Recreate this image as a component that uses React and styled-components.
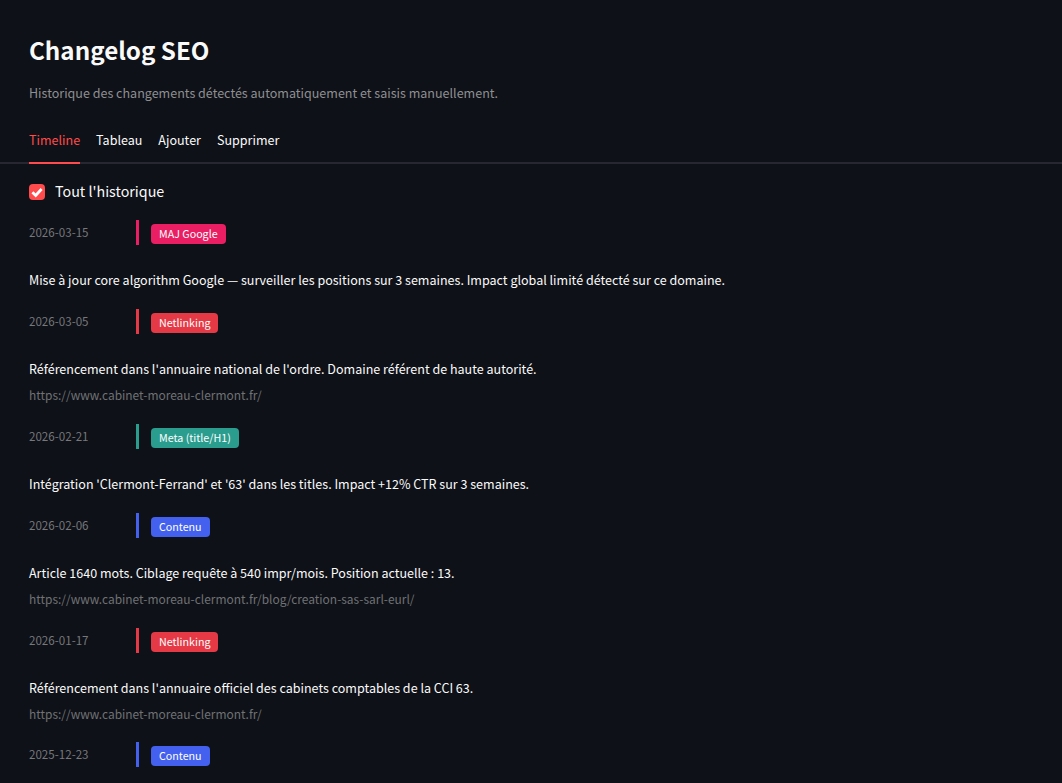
import React from "react";
import styled, { createGlobalStyle } from "styled-components";

const Global = createGlobalStyle`
  html, body { margin: 0; padding: 0; background: #0e1117; height: 100%; overflow: hidden; }
  * { box-sizing: border-box; }
`;
const Page = styled.div`
  height: 783px; overflow: hidden; background: #0e1117; color: #fafafa;
  font-family: "Noto Sans CJK JP", "Noto Sans", sans-serif; font-size: 12.5px; padding-top: 29px;
`;
const Title = styled.h1`
  margin: 0 0 0 29px; font-size: 24.2px; font-weight: 600; line-height: 42px; color: #fafafa;
`;
const Subtitle = styled.p`
  margin: 10px 0 0 29px; font-size: 12.54px; line-height: 24px; color: #8e8f92;
`;
const Tabs = styled.div`
  display: flex; gap: 16px; margin-top: 15px; padding-left: 29px; height: 44px;
  border-bottom: 2px solid #262730;
`;
const Tab = styled.div`
  height: 44px; line-height: 40px; font-size: 12.54px; color: ${p => p.$active ? "#ff4b4b" : "#fafafa"};
  border-bottom: 2px solid ${p => p.$active ? "#ff4b4b" : "transparent"};
`;
const Check = styled.label`
  display: flex; align-items: center; gap: 10px; margin: 16px 0 0 29px; height: 24px;
  font-size: 14.3px; color: #fafafa;
`;
const CheckText = styled.span`
  margin-top: -4px;
`;
const Box = styled.span`
  width: 16px; height: 16px; border-radius: 4px; background: #ff4b4b; display: flex;
  align-items: center; justify-content: center;
`;
const List = styled.div`
  margin: 16px 0 0 29px;
`;
const Head = styled.div`
  display: flex; align-items: center; height: 25px;
`;
const DateText = styled.span`
  width: 107px; font-size: 11.6px; color: #77787c; margin-top: -1.1px;
`;
const Bar = styled.span`
  width: 3px; height: 25px; background: ${p => p.$c}; margin-right: 12px;
`;
const Tag = styled.span`
  background: ${p => p.$c}; color: #fff; font-size: 10.7px; line-height: 20px; height: 20px;
  padding: 0 8px; border-radius: 4px; margin-top: 3px;
`;
const Desc = styled.div`
  margin-top: 24px; font-size: 12.54px; line-height: 22px; color: #fafafa;
`;
const Url = styled.div`
  margin-top: 4px; font-size: 11.95px; line-height: 22px; color: #707175;
`;
const Entry = styled.div`
  height: ${p => (p.$url ? 114.8 : 89)}px;
`;

const entries = [
  ["2026-03-15", "MAJ Google", "#e91e63", "Mise à jour core algorithm Google — surveiller les positions sur 3 semaines. Impact global limité détecté sur ce domaine."],
  ["2026-03-05", "Netlinking", "#e63946", "Référencement dans l'annuaire national de l'ordre. Domaine référent de haute autorité.", "https://www.cabinet-moreau-clermont.fr/"],
  ["2026-02-21", "Meta (title/H1)", "#2a9d8f", "Intégration 'Clermont-Ferrand' et '63' dans les titles. Impact +12% CTR sur 3 semaines."],
  ["2026-02-06", "Contenu", "#4361ee", "Article 1640 mots. Ciblage requête à 540 impr/mois. Position actuelle : 13.", "https://www.cabinet-moreau-clermont.fr/blog/creation-sas-sarl-eurl/"],
  ["2026-01-17", "Netlinking", "#e63946", "Référencement dans l'annuaire officiel des cabinets comptables de la CCI 63.", "https://www.cabinet-moreau-clermont.fr/"],
  ["2025-12-23", "Contenu", "#4361ee", ""],
];

export default function App() {
  return (
    <Page>
      <Global />
      <Title>Changelog SEO</Title>
      <Subtitle>Historique des changements détectés automatiquement et saisis manuellement.</Subtitle>
      <Tabs>
        <Tab $active>Timeline</Tab><Tab>Tableau</Tab><Tab>Ajouter</Tab><Tab>Supprimer</Tab>
      </Tabs>
      <Check>
        <Box><svg width="14" height="14" viewBox="0 0 14 14" fill="none"><path d="M2.4 7.2 L5.7 10.4 L11.6 4" stroke="#fff" strokeWidth="2.8"/></svg></Box>
        <CheckText>Tout l'historique</CheckText>
      </Check>
      <List>
        {entries.map(([d, t, c, desc, url]) => (
          <Entry key={d} $url={!!url}>
            <Head><DateText>{d}</DateText><Bar $c={c} /><Tag $c={c}>{t}</Tag></Head>
            {desc && <Desc>{desc}</Desc>}
            {url && <Url>{url}</Url>}
          </Entry>
        ))}
      </List>
    </Page>
  );
}
